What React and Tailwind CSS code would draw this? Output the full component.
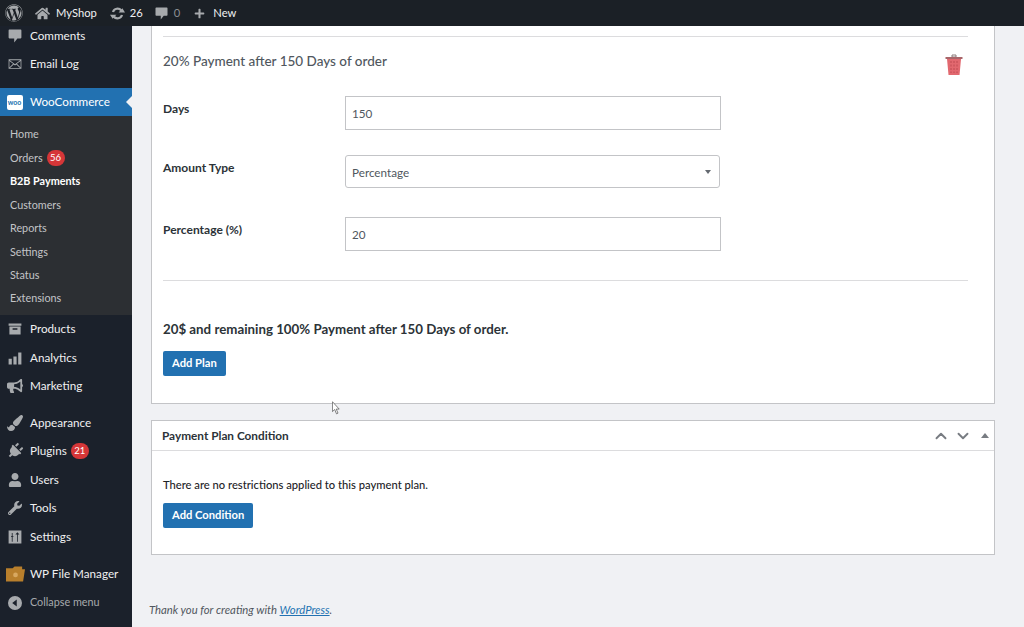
import { FaWordpress, FaHome, FaPlus, FaBullhorn, FaPaintBrush, FaPlug, FaUser, FaWrench } from 'react-icons/fa'
import { ChevronUp, ChevronDown } from 'lucide-react'

const FONT = 'font-["Lato","Noto_Sans",sans-serif]'

// ── Small drawn icons ──────────────────────────────────────────
const CommentIcon = ({ className }) => (
    <svg viewBox="0 0 20 20" className={className} fill="currentColor">
        <path d="M3 2h14a1 1 0 0 1 1 1v9a1 1 0 0 1-1 1h-4l-4 5v-5H3a1 1 0 0 1-1-1V3a1 1 0 0 1 1-1z" />
    </svg>
)
const UpdateIcon = () => (
    <svg viewBox="0 0 20 20" className="ml-[13px] w-[15px] h-[15px] text-[#a7aaad]" fill="none" stroke="currentColor" strokeWidth="3">
        <path d="M4 8a6.300 6.300 0 0 1 11-2M16 12a6.300 6.300 0 0 1-11 2" />
        <path d="M11.500 8.500H20L16.500 3zM8.500 11.500H0L3.500 17z" fill="currentColor" stroke="none" />
    </svg>
)
const MailIcon = () => (
    <svg viewBox="0 0 20 20" className="w-4 h-4 text-[#a7aaad]" fill="currentColor">
        <path d="M2 4h16v12H2zM3.500 5.200 10 10.400l6.500-5.200zM3 6.200v8.200l4.600-4.600zM17 6.200l-4.600 3.600 4.600 4.600zM8.400 10.500 3.800 15h12.400l-4.600-4.500L10 11.800z" fillRule="evenodd" />
    </svg>
)
const ProductsIcon = () => (
    <svg viewBox="0 0 20 20" className="w-4 h-4 text-[#a7aaad]" fill="currentColor">
        <path d="M2 3h16v3H2zM3 7h14v10H3zM7 9v2h6V9z" fillRule="evenodd" />
    </svg>
)
const AnalyticsIcon = () => (
    <svg viewBox="0 0 20 20" className="w-4 h-4 text-[#a7aaad]" fill="currentColor">
        <path d="M2 11h4v7H2zM8 8h4v10H8zM14 3h4v15h-4z" />
    </svg>
)
const SettingsIcon = () => (
    <svg viewBox="0 0 20 20" className="w-4 h-4 text-[#a7aaad]" fill="currentColor">
        <path d="M2 2h16v16H2zM6 5v4H5v1h1v6h1v-6h1V9H7V5zM13 4l-2.500 3h2V16h1V7h2z" fillRule="evenodd" />
    </svg>
)
const FolderIcon = () => (
    <svg viewBox="0 0 20 16" className="w-[19px] h-[16px]">
        <path d="M0 2h7l2-2h8v3h3l-2 13H0z" fill="#b87f2c" />
        <circle cx="10" cy="9" r="2.500" fill="#d8a860" />
    </svg>
)
const CollapseIcon = () => (
    <svg viewBox="0 0 20 20" className="w-[14px] h-[14px] text-[#a7aaad]" fill="currentColor">
        <path d="M10 0a10 10 0 1 1 0 20 10 10 0 0 1 0-20zM12.500 5 6 10l6.500 5z" fillRule="evenodd" />
    </svg>
)
const WooIcon = () => (
    <div className="w-4 h-[15px] bg-white rounded-[2px] flex items-center justify-center text-[7px] leading-none font-bold text-[#2271b1]">woo</div>
)
const TrashIcon = () => (
    <svg viewBox="0 0 18 21" className="w-[18px] h-[21px]">
        <path d="M7 1h4v2H7z" fill="none" stroke="#8a7a7a" />
        <path d="M0.500 3h17v2h-17z" fill="#a8666a" />
        <path d="M2 5h14l-1.500 16h-11z" fill="#e2686f" />
        <path d="M6 7v12M9 7v12M12 7v12" stroke="#b8444c" strokeWidth="0.800" strokeDasharray="2 1.500" />
    </svg>
)
const CursorIcon = () => (
    <svg viewBox="0 0 10 15" className="absolute left-[332px] top-[401px] w-[9px] h-[14px]">
        <path d="M0.500 0.500v11l2.500-2.300 2 4.800 1.700-.8-2-4.500h3.300z" fill="#fff" stroke="#555" strokeWidth="0.800" />
    </svg>
)

const MENU_TOP = [
    { label: 'Comments', icon: <CommentIcon className="w-4 h-4 text-[#a7aaad]" />, h: 'h-[20px]' },
    { label: 'Email Log', icon: <MailIcon />, h: 'h-[35px]' },
]
const SUBMENU = [
    { label: 'Home', h: 'h-[24px]' },
    { label: 'Orders', badge: '56', h: 'h-[24px]' },
    { label: 'B2B Payments', active: true, h: 'h-[23px]' },
    { label: 'Customers', h: 'h-[24px]' },
    { label: 'Reports', h: 'h-[23px]' },
    { label: 'Settings', h: 'h-[24px]' },
    { label: 'Status', h: 'h-[23px]' },
    { label: 'Extensions', h: 'h-[22px]' },
]
const MENU_MID = [
    { label: 'Products', icon: <ProductsIcon /> },
    { label: 'Analytics', icon: <AnalyticsIcon /> },
    { label: 'Marketing', icon: <FaBullhorn className="w-4 h-4 text-[#a7aaad]" /> },
]
const MENU_LOW = [
    { label: 'Appearance', icon: <FaPaintBrush className="w-4 h-4 text-[#a7aaad]" /> },
    { label: 'Plugins', icon: <FaPlug className="w-4 h-4 text-[#a7aaad] rotate-45" />, badge: '21' },
    { label: 'Users', icon: <FaUser className="w-[14px] h-[14px] text-[#a7aaad]" /> },
    { label: 'Tools', icon: <FaWrench className="w-[14px] h-[14px] text-[#a7aaad]" /> },
    { label: 'Settings', icon: <SettingsIcon /> },
]

const Badge = ({ children }) => (
    <span className="ml-[4px] w-[18px] h-[16px] rounded-full bg-[#d63638] text-white text-[9.500px] leading-[16px] text-center">{children}</span>
)

const MenuRow = ({ item, h = 'h-[28.500px]' }) => (
    <div className={`${item.h || h} flex items-center text-[11.700px] text-[#f0f0f1]`}>
        <span className="w-[30px] shrink-0 flex justify-center pl-[1px] pr-[1px]">{item.icon}</span>
        <span>{item.label}</span>
        {item.badge && <Badge>{item.badge}</Badge>}
    </div>
)

const Sidebar = () => (
    <aside className="w-[132px] shrink-0 bg-[#1b212b] flex flex-col">
        <div className="pb-[7px]">
            {MENU_TOP.map(item => <MenuRow key={item.label} item={item} />)}
        </div>
        <div className="relative h-[28px] bg-[#2271b1] flex items-center text-[11.700px] text-white">
            <span className="w-[30px] flex justify-center pr-[1px]"><WooIcon /></span>
            <span>WooCommerce</span>
            <span className="absolute right-0 top-[8px] border-y-[6px] border-y-transparent border-r-[6px] border-r-[#f0f1f4]" />
        </div>
        <div className="h-[199px] bg-[#2c2f33] pt-[6px] pl-[10px]">
            {SUBMENU.map(item => (
                <div key={item.label} className={`${item.h} flex items-center text-[10.800px] ${item.active ? 'font-bold text-white' : 'text-[#c3c4c7]'}`}>
                    {item.label}
                    {item.badge && <Badge>{item.badge}</Badge>}
                </div>
            ))}
        </div>
        <div className="pb-[8px]">
            {MENU_MID.map(item => <MenuRow key={item.label} item={item} />)}
        </div>
        <div className="pb-[9px]">
            {MENU_LOW.map(item => <MenuRow key={item.label} item={item} />)}
        </div>
        <div className="h-[28px] flex items-center text-[11.700px] text-[#f0f0f1]">
            <span className="w-[30px] flex justify-center pl-[1px]"><FolderIcon /></span>
            <span>WP File Manager</span>
        </div>
        <div className="h-[29px] flex items-center text-[10.800px] text-[#a7aaad]">
            <span className="w-[30px] flex justify-center"><CollapseIcon /></span>
            <span>Collapse menu</span>
        </div>
    </aside>
)

const TopBar = () => (
    <header className="h-[26px] shrink-0 bg-[#1b2026] flex items-center text-[11.200px] text-[#f0f0f1]">
        <FaWordpress className="ml-[5px] w-[18px] h-[18px] text-[#a7aaad]" />
        <FaHome className="ml-[12px] w-[15px] h-[15px] text-[#a7aaad]" />
        <span className="ml-[6px]">MyShop</span>
        <UpdateIcon />
        <span className="ml-[5px]">26</span>
        <CommentIcon className="ml-[11px] w-[15px] h-[15px] text-[#a7aaad]" />
        <span className="ml-[5px] text-[#8c8f94]">0</span>
        <FaPlus className="ml-[14px] w-[11px] h-[11px] text-[#a7aaad]" />
        <span className="ml-[8px]">New</span>
    </header>
)

const Field = ({ label, value, className }) => (
    <div className={`flex ${className}`}>
        <label className="w-[182px] shrink-0 pt-[4px] text-[12px] font-bold text-[#2c3338]">{label}</label>
        <div className="w-[376px] h-[34px] border border-[#c3c4c7] flex items-center px-[6px] pt-[2px] text-[11.700px] text-[#50575e]">{value}</div>
    </div>
)

const PrimaryButton = ({ children }) => (
    <button className="h-[25px] px-[9px] rounded-[2px] bg-[#2271b1] text-white text-[11.200px] font-bold">{children}</button>
)

export default function App() {
    return (
        <div className={`relative w-[1024px] h-[627px] overflow-hidden flex flex-col bg-[#f0f1f4] ${FONT}`}>
            <TopBar />
            <div className="flex flex-1 min-h-0">
                <Sidebar />
                <main className="flex-1 min-w-0 pl-[19px] pr-[29px]">
                    {/* Plan card, scrolled under the top bar */}
                    <section className="h-[378px] bg-white border-x border-b border-[#c3c4c7] pl-[11px] pr-[26px] pt-[10px]">
                        <div className="h-[38px] border-t border-[#dcdcde] flex justify-between pt-[16px] pr-[4px]">
                            <h3 className="text-[13.500px] leading-[16px] font-medium text-[#50575e]">20% Payment after 150 Days of order</h3>
                            <span className="mr-[1px] pt-[1px]"><TrashIcon /></span>
                        </div>
                        <Field label="Days" value="150" className="mt-[22px]" />
                        <div className="flex mt-[25px]">
                            <label className="w-[182px] shrink-0 pt-[4px] text-[12px] font-bold text-[#2c3338]">Amount Type</label>
                            <div className="w-[375px] h-[33px] rounded-[3px] border border-[#c3c4c7] flex items-center justify-between pl-[6px] pr-[8px] pt-[3px] text-[11.700px] text-[#50575e]">
                                Percentage
                                <span className="-mt-[3px] border-x-[3.500px] border-x-transparent border-t-[4px] border-t-[#646970]" />
                            </div>
                        </div>
                        <Field label="Percentage (%)" value="20" className="mt-[29px]" />
                        <div className="mt-[29px] border-t border-[#dcdcde]" />
                        <p className="mt-[40px] text-[13.300px] leading-[17px] font-bold text-[#2c3338]">20$ and remaining 100% Payment after 150 Days of order.</p>
                        <div className="mt-[11px]"><PrimaryButton>Add Plan</PrimaryButton></div>
                    </section>

                    {/* Condition card */}
                    <section className="mt-[16px] h-[135px] bg-white border border-[#c3c4c7]">
                        <div className="h-[30px] border-b border-[#dcdcde] flex items-center pl-[10px] pr-[4px]">
                            <h2 className="flex-1 pt-[1px] text-[11.800px] font-bold text-[#2c3338]">Payment Plan Condition</h2>
                            <ChevronUp className="w-[18px] h-[18px] text-[#787c82]" strokeWidth={2.500} />
                            <ChevronDown className="ml-[4px] w-[18px] h-[18px] text-[#787c82]" strokeWidth={2.500} />
                            <span className="ml-[9px] mr-[1px] border-x-[4px] border-x-transparent border-b-[5px] border-b-[#787c82]" />
                        </div>
                        <div className="pl-[11px] pt-[27px]">
                            <p className="text-[11.200px] leading-[14px] font-medium text-[#1d2327]">There are no restrictions applied to this payment plan.</p>
                            <div className="mt-[9px]"><PrimaryButton>Add Condition</PrimaryButton></div>
                        </div>
                    </section>

                    <p className="mt-[47px] -ml-[2px] text-[11.300px] italic text-[#50575e]">
                        Thank you for creating with <a className="text-[#2271b1] underline">WordPress</a>.
                    </p>
                </main>
            </div>
            <CursorIcon />
        </div>
    )
}
